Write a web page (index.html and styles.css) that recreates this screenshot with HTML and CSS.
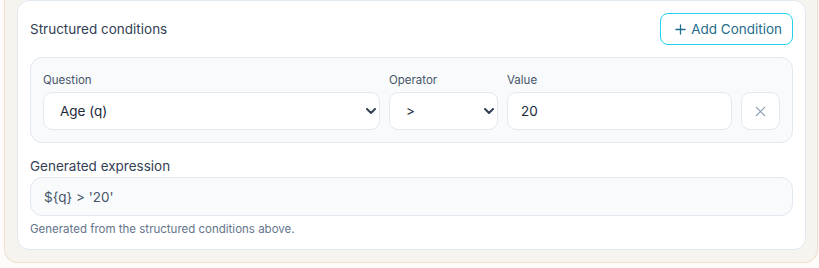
FILE: index.html
```html
<!doctype html>
<html lang="en">
    <head>
        <meta charset="UTF-8" />
        <meta name="viewport" content="width=device-width, initial-scale=1.0" />
        <title>Condition Builder</title>
        <link rel="stylesheet" href="styles.css">
    </head>
    <body>
        <div class="shell">
            <div class="card">
                <div class="card-head">
                    <span class="card-title">Structured conditions</span>
                    <button class="add-btn" type="button">
                        <svg width="11" height="11" viewBox="0 0 12 12" aria-hidden="true">
                            <path d="M6 1v10M1 6h10" stroke="currentColor" stroke-width="1.4" stroke-linecap="round" />
                        </svg>
                        Add Condition
                    </button>
                </div>

                <div class="cond-row">
                    <div class="field">
                        <label for="question">Question</label>
                        <div class="select-wrap">
                            <select id="question">
                                <option selected>Age (q)</option>
                            </select>
                            <svg class="chevron" width="10" height="6" viewBox="0 0 10 6" aria-hidden="true">
                                <path d="M1 1l4 4 4-4" fill="none" stroke="currentColor" stroke-width="2" stroke-linecap="round" stroke-linejoin="round" />
                            </svg>
                        </div>
                    </div>
                    <div class="field">
                        <label for="operator">Operator</label>
                        <div class="select-wrap">
                            <select id="operator">
                                <option selected>&gt;</option>
                            </select>
                            <svg class="chevron" width="10" height="6" viewBox="0 0 10 6" aria-hidden="true">
                                <path d="M1 1l4 4 4-4" fill="none" stroke="currentColor" stroke-width="2" stroke-linecap="round" stroke-linejoin="round" />
                            </svg>
                        </div>
                    </div>
                    <div class="field">
                        <label for="value">Value</label>
                        <input type="text" id="value" value="20" />
                    </div>
                    <button class="remove-btn" type="button" aria-label="Remove condition">
                        <svg width="11" height="11" viewBox="0 0 12 12" aria-hidden="true">
                            <path d="M1.5 1.5l9 9M10.5 1.5l-9 9" stroke="currentColor" stroke-width="1.3" stroke-linecap="round" />
                        </svg>
                    </button>
                </div>

                <div class="expr-label">Generated expression</div>
                <div class="expr-box">${q} &gt; '20'</div>
                <p class="hint">Generated from the structured conditions above.</p>
            </div>
        </div>
    </body>
</html>
```

FILE: styles.css
```css
body {
    margin: 0;
    padding: 0 1px 0 4px;
    background: #fdfcfb;
    font-family: Inter, "Noto Sans", sans-serif;
    color: #1e293b;
}
.shell {
    background: #f6f4ef;
    border: 1px solid #efdfcc;
    border-top: none;
    border-radius: 0 0 14px 14px;
    padding: 0 11px 12px 12px;
}
.card {
    background: #fff;
    border: 1px solid #e2e8f0;
    border-radius: 12px;
    padding: 12px 12px 12px;
}
.card-head {
    display: flex;
    justify-content: space-between;
    align-items: center;
}
.card-title {
    font-size: 13.5px;
    color: #334155;
}
.add-btn {
    display: flex;
    align-items: center;
    gap: 5px;
    height: 32px;
    padding: 0 10px 0 14px;
    background: #fff;
    border: 1px solid #22d3ee;
    border-radius: 8px;
    color: #1f6d8c;
    font-family: inherit;
    font-size: 13.5px;
    cursor: pointer;
}
.cond-row {
    display: grid;
    grid-template-columns: 337px 109px 225px 39px;
    gap: 9px;
    align-items: end;
    margin-top: 12px;
    padding: 14px 12px 12px;
    background: #f8fafc;
    border: 1px solid #e2e8f0;
    border-radius: 12px;
}
.field {
    display: flex;
    flex-direction: column;
    gap: 4px;
}
.field label {
    font-size: 11.5px;
    line-height: 16px;
    color: #475569;
}
.select-wrap {
    position: relative;
}
select,
input {
    width: 100%;
    height: 38px;
    box-sizing: border-box;
    background: #fff;
    border: 1px solid #e2e8f0;
    border-radius: 9px;
    font-family: inherit;
    font-size: 13.5px;
    color: #1e293b;
    outline: none;
}
select {
    appearance: none;
    padding: 0 28px 0 16px;
}
input {
    padding: 0 13px;
}
.chevron {
    position: absolute;
    right: 4px;
    top: 16px;
    color: #334155;
    pointer-events: none;
}
.remove-btn {
    width: 39px;
    height: 38px;
    display: flex;
    align-items: center;
    justify-content: center;
    background: #fff;
    border: 1px solid #e2e8f0;
    border-radius: 9px;
    color: #8a9bb0;
    cursor: pointer;
}
.expr-label {
    margin-top: 13px;
    font-size: 13.5px;
    line-height: 20px;
    color: #334155;
}
.expr-box {
    margin-top: 1px;
    height: 39px;
    box-sizing: border-box;
    display: flex;
    align-items: center;
    padding: 0 13px;
    background: #f8fafc;
    border: 1px solid #e2e8f0;
    border-radius: 12px;
    font-size: 13.5px;
    color: #475569;
}
.hint {
    margin: 5px 0 0;
    font-size: 11.5px;
    line-height: 16px;
    color: #64748b;
}
```
